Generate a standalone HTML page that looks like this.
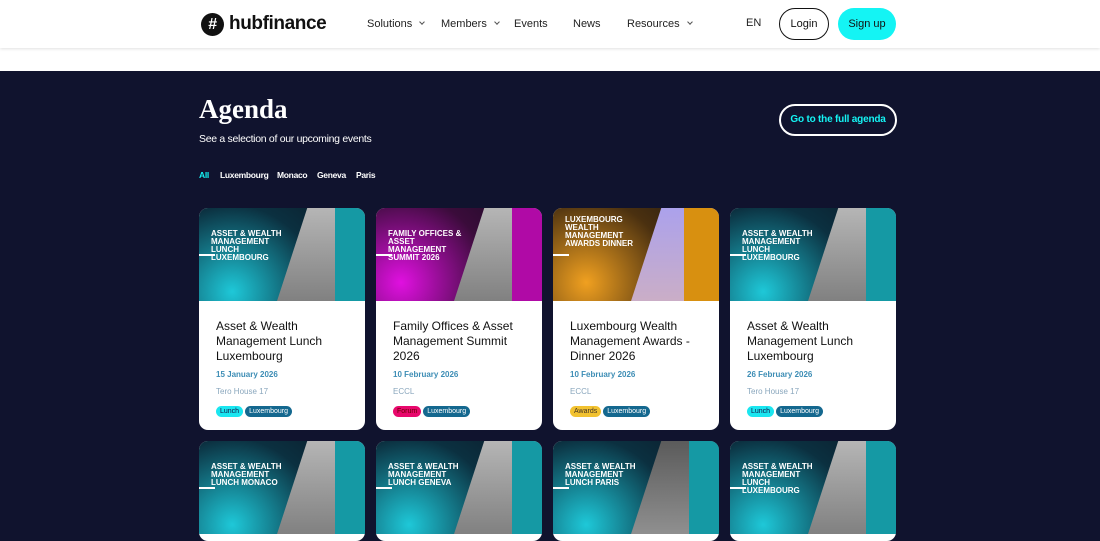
<!DOCTYPE html>
<html><head><meta charset="utf-8"><style>
*{margin:0;padding:0;box-sizing:border-box}
body{width:1100px;height:527px;overflow:hidden;background:#10132e;font-family:"Liberation Sans",sans-serif;position:relative}
.hdr{position:absolute;left:0;top:0;width:1100px;height:48px;background:#fff;box-shadow:0 1px 3px rgba(0,0,0,.12);z-index:2}
.white2{position:absolute;left:0;top:48px;width:1100px;height:23px;background:#fff}
.logo{position:absolute;left:201px;top:13px;width:23px;height:23px;border-radius:50%;background:#111;color:#fff;font:bold italic 16px/23px "Liberation Sans";text-align:center;z-index:3}
.logot{position:absolute;left:229px;top:13px;font-size:19px;font-weight:bold;color:#111;letter-spacing:-.4px;z-index:3}
.nav{position:absolute;top:18px;font-size:11px;color:#222;z-index:3}
.chev{display:inline-block;width:4px;height:4px;border-right:1px solid #555;border-bottom:1px solid #555;transform:rotate(45deg);margin-left:8px;position:relative;top:-3px}
.login{position:absolute;left:779px;top:8px;width:50px;height:32px;border:1px solid #111;border-radius:16px;font-size:11px;text-align:center;line-height:30px;color:#111;z-index:3}
.sign{position:absolute;left:838px;top:8px;width:58px;height:32px;background:#14f4f4;border-radius:16px;font-size:11px;text-align:center;line-height:32px;color:#111;z-index:3}
h1{position:absolute;left:199px;top:94px;font:bold 27px "Liberation Serif",serif;color:#fff}
.sub{position:absolute;left:199px;top:133px;font-size:10.5px;color:#fff;letter-spacing:-.3px}
.go{position:absolute;left:779px;top:104px;width:118px;height:32px;border:2px solid #fff;border-radius:16px;color:#14f4f4;font-size:10px;font-weight:bold;text-align:center;line-height:28px;letter-spacing:-.2px}
.flt{position:absolute;top:170px;font-size:8.5px;font-weight:bold;color:#fff;letter-spacing:-.3px;white-space:nowrap}
.card{position:absolute;width:166px;background:#fff;border-radius:9px;overflow:hidden}
.img{height:93px;position:relative;overflow:hidden}
.img .t{position:absolute;left:12px;top:22px;color:#fff;font:900 8px/8px "Liberation Sans";width:80px;text-transform:uppercase}
.img .band{position:absolute;left:92px;top:-10px;width:60px;height:120px;background:linear-gradient(180deg,#bbb,#777);transform:skewX(-18deg)}
.img .ln{position:absolute;left:0;top:46px;width:16px;height:2px;background:#fff}
.body{padding:18px 17px 0}
.tt{font-size:12px;line-height:15px;color:#111}
.dt{font-size:8px;font-weight:bold;color:#3d8db5;margin-top:6px}
.loc{font-size:8px;color:#8aa7bd;margin-top:8px}
.tags{margin-top:4px}
.tag{display:inline-block;font-size:7px;padding:2px 4px;border-radius:6px;margin-right:2px}
.lu{background:#1ae6f0;color:#114}.lx{background:#14688f;color:#fff}.fo{background:#e8086c;color:#600}.aw{background:#f2c230;color:#432}
</style></head><body>
<div class="hdr"></div><div class="white2"></div>
<div class="logo">#</div><div class="logot">hubfinance</div>
<div class="nav" style="left:367px">Solutions<span class="chev"></span></div>
<div class="nav" style="left:441px">Members<span class="chev"></span></div>
<div class="nav" style="left:514px">Events</div>
<div class="nav" style="left:573px">News</div>
<div class="nav" style="left:627px">Resources<span class="chev"></span></div>
<div class="nav" style="left:746px;top:17px">EN</div>
<div class="login">Login</div><div class="sign">Sign up</div>
<h1>Agenda</h1>
<div class="sub">See a selection of our upcoming events</div>
<div class="go">Go to the full agenda</div>
<div class="flt" style="left:199px;color:#14f4f4">All</div>
<div class="flt" style="left:220px">Luxembourg</div>
<div class="flt" style="left:277px">Monaco</div>
<div class="flt" style="left:317px">Geneva</div>
<div class="flt" style="left:356px">Paris</div>

<div class="card" style="left:199px;top:208px;height:222px">
<div class="img" style="background:radial-gradient(circle at 20% 90%,#1ec8d8,#0b3040 55%,#0a1422);"><div class="band"></div><div style="position:absolute;right:0;top:0;width:30px;height:93px;background:#1599a4"></div><div class="ln"></div><div class="t">Asset &amp; Wealth Management Lunch Luxembourg</div></div>
<div class="body"><div class="tt">Asset &amp; Wealth Management Lunch Luxembourg</div><div class="dt">15 January 2026</div><div class="loc">Tero House 17</div><div class="tags"><span class="tag lu">Lunch</span><span class="tag lx">Luxembourg</span></div></div></div>

<div class="card" style="left:376px;top:208px;height:222px">
<div class="img" style="background:radial-gradient(circle at 15% 80%,#e010e0,#3a0c3a 55%,#140c20);"><div class="band"></div><div style="position:absolute;right:0;top:0;width:30px;height:93px;background:#b00aa6"></div><div class="ln"></div><div class="t">Family Offices &amp; Asset Management Summit 2026</div></div>
<div class="body"><div class="tt">Family Offices &amp; Asset Management Summit 2026</div><div class="dt">10 February 2026</div><div class="loc">ECCL</div><div class="tags"><span class="tag fo">Forum</span><span class="tag lx">Luxembourg</span></div></div></div>

<div class="card" style="left:553px;top:208px;height:222px">
<div class="img" style="background:radial-gradient(circle at 20% 80%,#f0a020,#4a3010 55%,#1a1410);"><div class="band" style="background:linear-gradient(180deg,#a8a0f0,#d0b0c0)"></div><div style="position:absolute;right:0;top:0;width:35px;height:93px;background:#d89010"></div><div class="ln"></div><div class="t" style="top:8px">Luxembourg Wealth Management Awards Dinner</div></div>
<div class="body"><div class="tt">Luxembourg Wealth Management Awards - Dinner 2026</div><div class="dt">10 February 2026</div><div class="loc">ECCL</div><div class="tags"><span class="tag aw">Awards</span><span class="tag lx">Luxembourg</span></div></div></div>

<div class="card" style="left:730px;top:208px;height:222px">
<div class="img" style="background:radial-gradient(circle at 20% 90%,#1ec8d8,#0b3040 55%,#0a1422);"><div class="band"></div><div style="position:absolute;right:0;top:0;width:30px;height:93px;background:#1599a4"></div><div class="ln"></div><div class="t">Asset &amp; Wealth Management Lunch Luxembourg</div></div>
<div class="body"><div class="tt">Asset &amp; Wealth Management Lunch Luxembourg</div><div class="dt">26 February 2026</div><div class="loc">Tero House 17</div><div class="tags"><span class="tag lu">Lunch</span><span class="tag lx">Luxembourg</span></div></div></div>

<div class="card" style="left:199px;top:441px;height:100px">
<div class="img" style="background:radial-gradient(circle at 20% 90%,#1ec8d8,#0b3040 55%,#0a1422);"><div class="band"></div><div style="position:absolute;right:0;top:0;width:30px;height:93px;background:#1599a4"></div><div class="ln"></div><div class="t">Asset &amp; Wealth Management Lunch Monaco</div></div></div>
<div class="card" style="left:376px;top:441px;height:100px">
<div class="img" style="background:radial-gradient(circle at 20% 90%,#1ec8d8,#0b3040 55%,#0a1422);"><div class="band"></div><div style="position:absolute;right:0;top:0;width:30px;height:93px;background:#1599a4"></div><div class="ln"></div><div class="t">Asset &amp; Wealth Management Lunch Geneva</div></div></div>
<div class="card" style="left:553px;top:441px;height:100px">
<div class="img" style="background:radial-gradient(circle at 20% 90%,#1ec8d8,#0b3040 55%,#0a1422);"><div class="band" style="background:linear-gradient(180deg,#555,#999)"></div><div style="position:absolute;right:0;top:0;width:30px;height:93px;background:#1599a4"></div><div class="ln"></div><div class="t">Asset &amp; Wealth Management Lunch Paris</div></div></div>
<div class="card" style="left:730px;top:441px;height:100px">
<div class="img" style="background:radial-gradient(circle at 20% 90%,#1ec8d8,#0b3040 55%,#0a1422);"><div class="band"></div><div style="position:absolute;right:0;top:0;width:30px;height:93px;background:#1599a4"></div><div class="ln"></div><div class="t">Asset &amp; Wealth Management Lunch Luxembourg</div></div></div>
</body></html>
